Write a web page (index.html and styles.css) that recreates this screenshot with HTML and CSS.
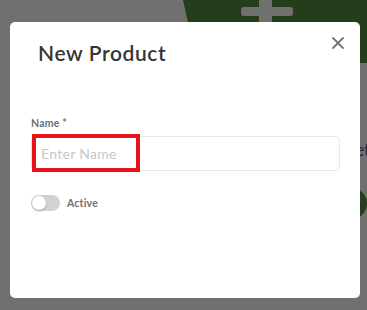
FILE: index.html
```html
<!DOCTYPE html>
<html lang="en">
<head>
  <meta charset="UTF-8">
  <meta name="viewport" content="width=device-width, initial-scale=1.0">
  <title>New Product</title>
  <link rel="stylesheet" href="styles.css">
</head>
<body>
  <!-- page behind the dimmed backdrop -->
  <div class="backdrop" aria-hidden="true">
    <div class="banner">
      <span class="plus-h"></span>
      <span class="plus-v"></span>
    </div>
    <span class="behind-text">Set</span>
    <span class="behind-dot"></span>
  </div>

  <div class="modal">
    <div class="modal-header">
      <h2>New Product</h2>
      <button class="close-btn" aria-label="Close">
        <svg width="12" height="12" viewBox="0 0 12 12">
          <path d="M1 1 L11 11 M11 1 L1 11" stroke="#6c7580" stroke-width="1.8" stroke-linecap="round" fill="none"/>
        </svg>
      </button>
    </div>
    <div class="modal-body">
      <label class="field-label" for="name">Name *</label>
      <div class="field">
        <input id="name" class="input" type="text" placeholder="Enter Name">
        <span class="highlight"></span>
      </div>
      <div class="toggle-row">
        <span class="toggle"><span class="knob"></span></span>
        <span class="toggle-label">Active</span>
      </div>
    </div>
  </div>
</body>
</html>
```

FILE: styles.css
```css
* { margin: 0; padding: 0; box-sizing: border-box; }

body {
  font-family: 'Lato', 'Open Sans', sans-serif;
  background-color: #707070;
  width: 367px;
  height: 310px;
  overflow: hidden;
  position: relative;
  padding: 22px 7px 12px 10px;
}

/* dimmed page behind the modal */
.backdrop {
  position: absolute;
  inset: 0;
}

.banner {
  position: absolute;
  left: 183px;
  top: 0;
  width: 200px;
  height: 63px;
  background-color: #243e1c;
  clip-path: polygon(0 0, 100% 0, 100% 100%, 7% 100%);
}

.plus-h,
.plus-v {
  position: absolute;
  background-color: #707070;
  border-radius: 3px;
}

.plus-h { left: 58px; top: 7px; width: 52px; height: 9px; }
.plus-v { left: 76px; top: -4px; width: 13px; height: 30px; }

.behind-text {
  position: absolute;
  left: 346px;
  top: 139px;
  font-size: 17px;
  color: #1c2a3e;
}

.behind-dot {
  position: absolute;
  left: 336px;
  top: 188px;
  width: 31px;
  height: 31px;
  border-radius: 50%;
  background-color: #243e1c;
}

.modal {
  position: relative;
  background: #fff;
  border-radius: 5px;
  width: 350px;
  height: 276px;
}

.modal-header {
  display: flex;
  justify-content: space-between;
  align-items: flex-start;
  padding: 18px 16px 0 28px;
}

h2 {
  font-size: 21px;
  font-weight: 600;
  letter-spacing: 0.6px;
  color: #363636;
  line-height: 26px;
}

.close-btn {
  background: none;
  border: none;
  cursor: pointer;
  margin-top: -3px;
  width: 12px;
  height: 12px;
  display: flex;
}

.modal-body {
  padding: 51px 20px 0 21px;
}

.field-label {
  display: block;
  font-size: 10.5px;
  font-weight: 700;
  letter-spacing: 0.2px;
  color: #6b6f76;
  line-height: 13px;
  margin-bottom: 6px;
}

.field {
  position: relative;
}

.input {
  width: 100%;
  height: 35px;
  border: 1px solid #e8e8e8;
  border-radius: 5px;
  padding: 0 9px;
  font-family: inherit;
  font-size: 14px;
  letter-spacing: 0.3px;
  color: #333;
  outline: none;
}

.input::placeholder {
  color: #c6c6c6;
}

/* annotation box over the field */
.highlight {
  position: absolute;
  left: 1px;
  top: -2px;
  width: 108px;
  height: 38px;
  border: 4px solid #e8141c;
  pointer-events: none;
}

.toggle-row {
  display: flex;
  align-items: center;
  gap: 7px;
  margin-top: 24px;
}

.toggle {
  position: relative;
  width: 29px;
  height: 16px;
  border-radius: 8px;
  background-color: #d2d2d2;
}

.knob {
  position: absolute;
  left: 1px;
  top: 1px;
  width: 14px;
  height: 14px;
  border-radius: 50%;
  background: #fff;
  box-shadow: 0 1px 2px rgba(0, 0, 0, 0.25);
}

.toggle-label {
  font-size: 10.5px;
  font-weight: 700;
  letter-spacing: 0.2px;
  color: #6b6f76;
}
```
